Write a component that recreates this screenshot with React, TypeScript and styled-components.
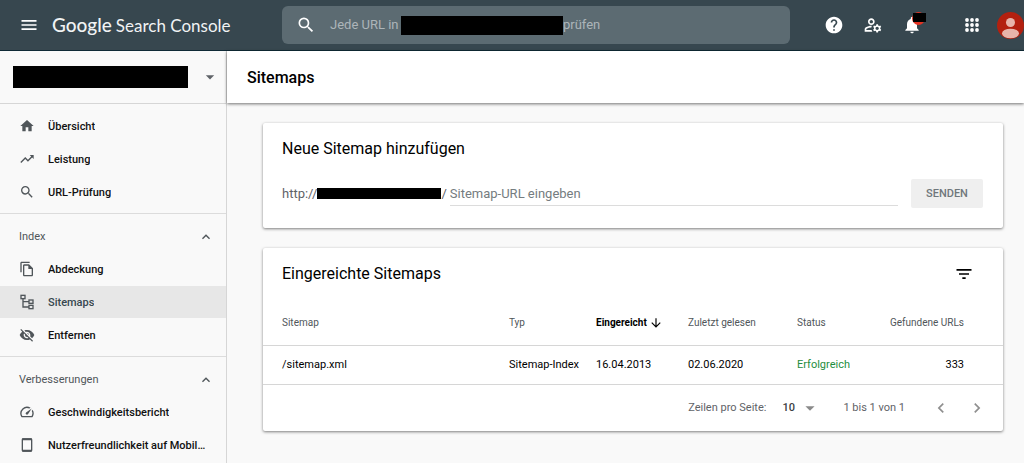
import React from 'react';
import styled, { createGlobalStyle } from 'styled-components';
import {
  MdArrowDownward,
  MdArrowDropDown,
  MdChevronLeft,
  MdChevronRight,
  MdFilterList,
  MdHelp,
  MdHome,
  MdExpandLess,
  MdMenu,
  MdNotifications,
  MdOutlineFileCopy,
  MdOutlineManageAccounts,
  MdOutlineSpeed,
  MdSearch,
  MdTrendingUp,
  MdVisibilityOff,
} from 'react-icons/md';

const GlobalStyle = createGlobalStyle`
  * { box-sizing: border-box; }
  body {
    margin: 0;
    background: #f9f9f9;
    color: #000;
    font-family: Roboto, "Liberation Sans", sans-serif;
    font-size: 11px;
    line-height: 16px;
  }
  button, input, select { font: inherit; color: inherit; }
  svg { display: block; flex: none; }
`;

const Page = styled.div`
  display: flex;
  flex-direction: column;
  min-height: 100vh;
  overflow-x: hidden;
`;

const PlainButton = styled.button`
  display: flex;
  align-items: center;
  flex: none;
  padding: 0;
  border: 0;
  background: none;
  cursor: pointer;
`;

const Redacted = styled.span<{ $width: number; $height: number }>`
  display: block;
  flex: none;
  width: ${(p) => p.$width}px;
  height: ${(p) => p.$height}px;
  background: #000;
`;

const TopBar = styled.header`
  display: flex;
  align-items: center;
  height: 51px;
  background: #37474f;
  border-bottom: 1px solid #0f2a36;
  color: #fff;
`;

const Brand = styled.div`
  display: flex;
  align-items: center;
  gap: 13px;
  flex: none;
  width: 282px;
  padding-left: 19px;
`;

const Logo = styled.a`
  display: flex;
  align-items: baseline;
  gap: 4px;
  color: #f1f3f4;
  font-family: Lato, "Open Sans", sans-serif;
  font-size: 17px;
  line-height: 24px;
  text-decoration: none;
  white-space: nowrap;

  b { font-weight: 500; font-size: 19px; }
`;

const SearchBox = styled.div`
  position: relative;
  display: flex;
  align-items: center;
  flex: 1;
  height: 38px;
  padding-left: 14px;
  border-radius: 6px;
  background: #5c6b72;
`;

const SearchInput = styled.input`
  flex: 1;
  min-width: 0;
  height: 100%;
  margin-left: 14px;
  border: 0;
  outline: 0;
  background: transparent;
  font-size: 13px;
`;

const SearchHint = styled.label`
  position: absolute;
  left: 48px;
  display: flex;
  align-items: center;
  color: #adb5b9;
  font-size: 13px;
  white-space: pre;
  pointer-events: none;
`;

const HiddenDomain = styled(Redacted)`
  margin-left: -5px;
`;

const Tools = styled.div`
  display: flex;
  align-items: center;
  gap: 19px;
  flex: none;
  margin-left: 34px;
`;

const Bell = styled(PlainButton)`
  position: relative;
  margin-right: 21px;
`;

const Badge = styled.span`
  position: absolute;
  top: -3px;
  left: 10px;
  width: 13px;
  height: 13px;
  border-radius: 7px;
  background: #e53322;
`;

const BadgeCount = styled(Redacted)`
  position: absolute;
  top: 1px;
  left: 1px;
`;

const Avatar = styled(PlainButton)`
  margin-left: -4px;
`;

const Body = styled.div`
  display: flex;
  flex: 1;
`;

const Sidebar = styled.nav`
  flex: none;
  width: 227px;
  border-right: 1px solid #d6d6d6;
`;

const Property = styled(PlainButton)`
  justify-content: space-between;
  width: 100%;
  height: 53px;
  padding: 0 6px 0 13px;
  border-bottom: 1px solid #d6d6d6;
  color: #5f6368;
`;

const NavSection = styled.section`
  display: flex;
  flex-direction: column;
  gap: 1px;
  padding: 6px 0 5px;
  border-bottom: 1px solid #dcdcdc;
`;

const NavHeading = styled(PlainButton)`
  justify-content: space-between;
  height: 32px;
  padding: 2px 12px 0 19px;
  color: #50565a;
`;

const NavItem = styled.a<{ $active?: boolean }>`
  display: flex;
  align-items: center;
  gap: 13px;
  height: 32px;
  padding: 0 14px 0 19px;
  background: ${(p) => (p.$active ? '#e7e7e7' : 'transparent')};
  color: ${(p) => (p.$active ? '#37474f' : '#111')};
  font-weight: 500;
  text-decoration: none;

  svg { color: #50565a; }
  span {
    padding-top: 1px;
    overflow: hidden;
    text-overflow: ellipsis;
    white-space: nowrap;
  }
`;

const Main = styled.main`
  flex: 1;
  min-width: 0;
`;

const TitleBar = styled.div`
  display: flex;
  align-items: center;
  height: 52px;
  padding: 2px 0 0 20px;
  background: #fff;
  box-shadow: 0 1px 3px rgba(0, 0, 0, 0.55);
`;

const PageTitle = styled.h1`
  margin: 0;
  font-size: 16px;
  line-height: 24px;
  font-weight: 500;
`;

const Cards = styled.div`
  display: flex;
  flex-direction: column;
  gap: 20px;
  padding: 20px 21px 32px 36px;
`;

const Card = styled.section`
  border-radius: 2px;
  background: #fff;
  box-shadow: 0 1px 3px rgba(0, 0, 0, 0.5);
`;

const CardHead = styled.div`
  display: flex;
  align-items: center;
  justify-content: space-between;
  height: 52px;
  padding: 0 29px 0 19px;
`;

const CardTitle = styled.h2`
  margin: 0;
  font-size: 16px;
  line-height: 24px;
  font-weight: 400;
`;

const AddForm = styled.form`
  display: flex;
  align-items: center;
  padding: 4px 20px 20px 19px;
  font-size: 13px;
`;

const Prefix = styled.label`
  display: flex;
  align-items: center;
  color: #5f6368;
`;

const UrlInput = styled.input`
  flex: 1;
  min-width: 0;
  height: 24px;
  margin: 0 13px 0 3px;
  padding: 0;
  border: 0;
  border-bottom: 1px solid #dcdcdc;
  outline: 0;
  background: none;

  &::placeholder { color: #757c80; opacity: 1; }
`;

const SendButton = styled.button`
  flex: none;
  width: 72px;
  height: 29px;
  padding: 0;
  border: 0;
  border-radius: 2px;
  background: #efefef;
  color: #6f777b;
  font-size: 11px;
  font-weight: 500;
`;

const Table = styled.table`
  width: 100%;
  table-layout: fixed;
  border-collapse: collapse;
`;

const Row = styled.tr<{ $height: number }>`
  height: ${(p) => p.$height}px;
  border-bottom: 1px solid #d6d6d6;

  > :first-child { padding-left: 19px; }
  > :last-child { padding-right: 39px; text-align: right; }
`;

const HeadCell = styled.th<{ $width?: number; $sorted?: boolean }>`
  width: ${(p) => (p.$width ? `${p.$width}px` : 'auto')};
  padding: 1px 0 0;
  color: ${(p) => (p.$sorted ? '#000' : '#50565a')};
  font-size: 10px;
  font-weight: ${(p) => (p.$sorted ? 700 : 400)};
  text-align: left;
  white-space: nowrap;
`;

const SortButton = styled(PlainButton)`
  gap: 2px;
`;

const Cell = styled.td<{ $good?: boolean }>`
  padding: 0;
  color: ${(p) => (p.$good ? '#1e8e3e' : '#000')};
`;

const Pager = styled.div`
  display: flex;
  align-items: center;
  justify-content: flex-end;
  height: 46px;
  padding-right: 16px;
  color: #5f6368;
`;

const RowsLabel = styled.label`
  display: flex;
  align-items: center;
  gap: 16px;
`;

const SelectWrap = styled.span`
  position: relative;
  display: flex;
  align-items: center;
  width: 39px;

  svg {
    position: absolute;
    right: 0;
    color: #8a8a8a;
    pointer-events: none;
  }
`;

const RowsSelect = styled.select`
  width: 100%;
  padding: 0;
  border: 0;
  outline: 0;
  appearance: none;
  background: none;
  color: #3c4043;
  font-weight: 500;
`;

const Range = styled.span`
  margin: 0 26px 0 22px;
`;

const PageButtons = styled.div`
  display: flex;
  gap: 16px;
  color: #8f8f8f;
`;

const SitemapIcon = () => (
  <svg width="16" height="16" viewBox="0 0 24 24" fill="none" stroke="currentColor" strokeWidth="2">
    <rect x="3" y="2" width="6" height="5" />
    <rect x="15" y="9" width="6" height="5" />
    <rect x="15" y="17" width="6" height="5" />
    <path d="M6 7v12.5h9M6 11.500h9" />
  </svg>
);

const PhoneIcon = () => (
  <svg width="16" height="16" viewBox="0 0 24 24" fill="none" stroke="currentColor">
    <rect x="5" y="3" width="14" height="18" rx="1" strokeWidth="2" />
    <path d="M5 3.500h14M5 20.500h14" strokeWidth="3" />
  </svg>
);

const AppsIcon = () => (
  <svg width="20" height="20" viewBox="0 0 20 20" fill="currentColor">
    {[5, 10, 15].map((y) => [5, 10, 15].map((x) => (
      <circle key={`${x}-${y}`} cx={x} cy={y} r="1.900" />
    )))}
  </svg>
);

const AvatarPicture = () => (
  <svg width="27" height="27" viewBox="0 0 27 27">
    <defs>
      <clipPath id="avatar-circle"><circle cx="13.500" cy="13.500" r="13.500" /></clipPath>
    </defs>
    <g clipPath="url(#avatar-circle)">
      <rect width="27" height="27" fill="#b3200f" />
      <circle cx="13.500" cy="10.500" r="4.500" fill="#e8b4aa" />
      <ellipse cx="13.500" cy="21.500" rx="8.500" ry="4.800" fill="#e8b4aa" />
    </g>
  </svg>
);

const overview = [
  { label: 'Übersicht', icon: <MdHome size={16} /> },
  { label: 'Leistung', icon: <MdTrendingUp size={16} /> },
  { label: 'URL-Prüfung', icon: <MdSearch size={16} /> },
];

const groups = [
  {
    title: 'Index',
    items: [
      { label: 'Abdeckung', icon: <MdOutlineFileCopy size={16} /> },
      { label: 'Sitemaps', icon: <SitemapIcon />, active: true },
      { label: 'Entfernen', icon: <MdVisibilityOff size={16} /> },
    ],
  },
  {
    title: 'Verbesserungen',
    items: [
      { label: 'Geschwindigkeitsbericht', icon: <MdOutlineSpeed size={16} /> },
      { label: 'Nutzerfreundlichkeit auf Mobil…', icon: <PhoneIcon /> },
    ],
  },
];

type Entry = { label: string; icon: React.ReactNode; active?: boolean };

const NavEntry = ({ label, icon, active }: Entry) => (
  <NavItem href="#" $active={active} aria-current={active ? 'page' : undefined}>
    {icon}
    <span>{label}</span>
  </NavItem>
);

export default function App() {
  return (
    <Page>
      <GlobalStyle />
      <TopBar>
        <Brand>
          <PlainButton aria-label="Menü"><MdMenu size={20} /></PlainButton>
          <Logo href="#"><b>Google</b><span>Search Console</span></Logo>
        </Brand>
        <SearchBox>
          <MdSearch size={20} />
          <SearchInput id="inspect" type="text" />
          <SearchHint htmlFor="inspect">
            <span>Jede URL in "</span>
            <HiddenDomain $width={162} $height={19} />
            <span>prüfen</span>
          </SearchHint>
        </SearchBox>
        <Tools>
          <PlainButton aria-label="Hilfe"><MdHelp size={20} /></PlainButton>
          <PlainButton aria-label="Nutzer verwalten"><MdOutlineManageAccounts size={20} /></PlainButton>
          <Bell aria-label="Benachrichtigungen">
            <MdNotifications size={20} />
            <Badge><BadgeCount $width={13} $height={9} /></Badge>
          </Bell>
          <PlainButton aria-label="Apps"><AppsIcon /></PlainButton>
          <Avatar aria-label="Konto"><AvatarPicture /></Avatar>
        </Tools>
      </TopBar>
      <Body>
        <Sidebar>
          <Property aria-label="Property auswählen">
            <Redacted $width={175} $height={22} />
            <MdArrowDropDown size={20} />
          </Property>
          <NavSection>
            {overview.map((item) => <NavEntry key={item.label} {...item} />)}
          </NavSection>
          {groups.map((group) => (
            <NavSection key={group.title}>
              <NavHeading aria-expanded="true">
                {group.title}
                <MdExpandLess size={16} />
              </NavHeading>
              {group.items.map((item) => <NavEntry key={item.label} {...item} />)}
            </NavSection>
          ))}
        </Sidebar>
        <Main>
          <TitleBar><PageTitle>Sitemaps</PageTitle></TitleBar>
          <Cards>
            <Card>
              <CardHead><CardTitle>Neue Sitemap hinzufügen</CardTitle></CardHead>
              <AddForm onSubmit={(e) => e.preventDefault()}>
                <Prefix htmlFor="sitemap-url">
                  http://
                  <Redacted $width={124} $height={11} />
                  /
                </Prefix>
                <UrlInput id="sitemap-url" type="text" placeholder="Sitemap-URL eingeben" />
                <SendButton type="submit" disabled>SENDEN</SendButton>
              </AddForm>
            </Card>
            <Card>
              <CardHead>
                <CardTitle>Eingereichte Sitemaps</CardTitle>
                <PlainButton aria-label="Filter"><MdFilterList size={20} /></PlainButton>
              </CardHead>
              <Table>
                <thead>
                  <Row $height={45}>
                    <HeadCell>Sitemap</HeadCell>
                    <HeadCell $width={87}>Typ</HeadCell>
                    <HeadCell $width={92} $sorted aria-sort="descending">
                      <SortButton>Eingereicht <MdArrowDownward size={14} /></SortButton>
                    </HeadCell>
                    <HeadCell $width={109}>Zuletzt gelesen</HeadCell>
                    <HeadCell $width={60}>Status</HeadCell>
                    <HeadCell $width={146}>Gefundene URLs</HeadCell>
                  </Row>
                </thead>
                <tbody>
                  <Row $height={39}>
                    <Cell>/sitemap.xml</Cell>
                    <Cell>Sitemap-Index</Cell>
                    <Cell>16.04.2013</Cell>
                    <Cell>02.06.2020</Cell>
                    <Cell $good>Erfolgreich</Cell>
                    <Cell>333</Cell>
                  </Row>
                </tbody>
              </Table>
              <Pager>
                <RowsLabel>
                  Zeilen pro Seite:
                  <SelectWrap>
                    <RowsSelect defaultValue="10">
                      <option>10</option>
                      <option>25</option>
                      <option>50</option>
                    </RowsSelect>
                    <MdArrowDropDown size={22} />
                  </SelectWrap>
                </RowsLabel>
                <Range>1 bis 1 von 1</Range>
                <PageButtons>
                  <PlainButton aria-label="Vorherige Seite"><MdChevronLeft size={20} /></PlainButton>
                  <PlainButton aria-label="Nächste Seite"><MdChevronRight size={20} /></PlainButton>
                </PageButtons>
              </Pager>
            </Card>
          </Cards>
        </Main>
      </Body>
    </Page>
  );
}
